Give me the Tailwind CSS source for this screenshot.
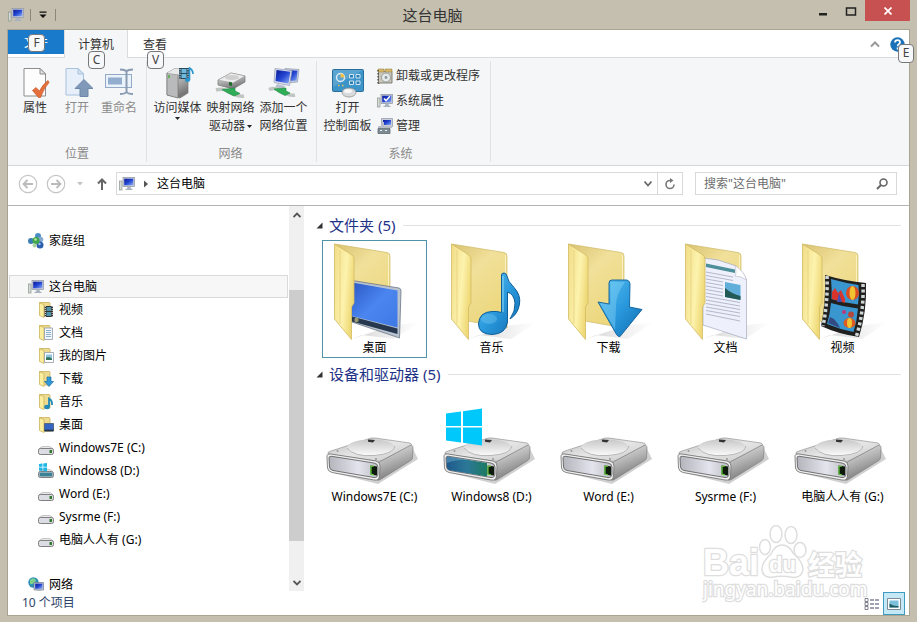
<!DOCTYPE html>
<html lang="zh-CN">
<head>
  <meta charset="UTF-8" />
  <meta name="viewport" content="width=device-width, initial-scale=1" />
  <title>这台电脑</title>
  <script src="https://cdn.jsdelivr.net/npm/@tailwindcss/browser@4"></script>
</head>
<body class="h-screen flex flex-col overflow-hidden bg-[#c5bfaf] px-2 pb-[7px] font-['Noto_Sans','Noto_Sans_CJK_SC',sans-serif] text-xs text-black">

  <!-- Shared icon shapes -->
  <svg class="absolute w-0 h-0" aria-hidden="true">
    <defs>
      <linearGradient id="gFlap" x1="0" y1="0" x2="1" y2="0.4">
        <stop offset="0" stop-color="#f0dc86" /><stop offset="0.6" stop-color="#fdf3ae" /><stop offset="1" stop-color="#efd977" />
      </linearGradient>
      <linearGradient id="gBack" x1="0" y1="0" x2="0.6" y2="1">
        <stop offset="0" stop-color="#d9c271" /><stop offset="0.4" stop-color="#f1e09a" /><stop offset="1" stop-color="#ecd77c" />
      </linearGradient>
      <linearGradient id="gShade" x1="0" y1="0" x2="1" y2="0">
        <stop offset="0" stop-color="#999" stop-opacity="0.45" /><stop offset="1" stop-color="#bbb" stop-opacity="0" />
      </linearGradient>
      <linearGradient id="gScreen" x1="0" y1="0" x2="1" y2="1">
        <stop offset="0" stop-color="#2c58c4" /><stop offset="0.5" stop-color="#4b86f0" /><stop offset="1" stop-color="#3c77e4" />
      </linearGradient>
      <linearGradient id="gBlue" x1="0" y1="0" x2="1" y2="1">
        <stop offset="0" stop-color="#5cc0ee" /><stop offset="0.5" stop-color="#2b9ade" /><stop offset="1" stop-color="#0f6cb0" />
      </linearGradient>
      <linearGradient id="gTop" x1="0" y1="0" x2="1" y2="1">
        <stop offset="0" stop-color="#b9b9b9" /><stop offset="0.5" stop-color="#e6e6e6" /><stop offset="1" stop-color="#c9c9c9" />
      </linearGradient>
      <linearGradient id="gSide" x1="0" y1="0" x2="0.4" y2="1">
        <stop offset="0" stop-color="#efefef" /><stop offset="0.5" stop-color="#b5b5b5" /><stop offset="1" stop-color="#777" />
      </linearGradient>
      <linearGradient id="gFront" x1="0" y1="0" x2="1" y2="0">
        <stop offset="0" stop-color="#b4b4bc" /><stop offset="0.6" stop-color="#e4e4ee" /><stop offset="1" stop-color="#bdbdc4" />
      </linearGradient>
      <linearGradient id="gSys" x1="0" y1="0" x2="1" y2="0">
        <stop offset="0" stop-color="#1e5a8c" /><stop offset="0.5" stop-color="#2c7898" /><stop offset="1" stop-color="#1d7a62" />
      </linearGradient>
      <linearGradient id="gNavy" x1="0" y1="0" x2="1" y2="1">
        <stop offset="0" stop-color="#0a1a96" /><stop offset="0.5" stop-color="#2446d2" /><stop offset="1" stop-color="#8fb0f6" />
      </linearGradient>
      <linearGradient id="gDisc" x1="0" y1="0" x2="0" y2="1">
        <stop offset="0" stop-color="#c8c8c8" /><stop offset="1" stop-color="#fafafa" />
      </linearGradient>

      <symbol id="folder" viewBox="0 0 105 98">
        <path d="M30 97 L68 84 L98 80 L72 97 L40 93z" fill="url(#gShade)" />
        <path d="M12.500 2 L65 10.500 Q68 11 68 14 V86 L29 79z" fill="url(#gBack)" stroke="#cfb964" stroke-width="0.7" />
        <path d="M66.500 13 V85" stroke="#fbf2c4" stroke-width="1" fill="none" />
      </symbol>
      <symbol id="flap" viewBox="0 0 105 98">
        <path d="M12.500 2 L30 13 Q32 14.500 32 17 V61 L29.500 65 V97.500 L12.500 77z" fill="url(#gFlap)" stroke="#d3bb62" stroke-width="0.8" />
        <path d="M18 8 V82" stroke="#e4cd78" stroke-width="0.7" />
      </symbol>

      <symbol id="drive" viewBox="0 0 105 98">
        <path d="M12 82 L56 93 L96 68 L90 56z" fill="#777" opacity="0.35" />
        <path d="M6 63 Q5 61 9 60 L46 48 Q49 46.500 53 47 L88 52 Q91 53 88 55 L61 69 Q58 71 54 70z" fill="url(#gTop)" stroke="#8a8a8a" stroke-width="0.6" />
        <ellipse cx="49" cy="56.500" rx="24" ry="8" fill="url(#gDisc)" />
        <path d="M25 57 Q32 66 52 64.500 Q72 63 73 55" fill="none" stroke="#a8a8a8" stroke-width="0.8" />
        <path d="M46 48.500 l7 0.500 -2 2.500 -5 -0.800z" fill="#333" />
        <circle cx="15.500" cy="60" r="1" fill="#999" /><circle cx="54" cy="68" r="1" fill="#999" />
        <path d="M57 72 Q58 70 61 69 L88 54.500 Q91 53.500 91 57 L90.500 67 Q90 69 88 70 L60 87.500 Q57 90 55 89z" fill="url(#gSide)" stroke="#777" stroke-width="0.6" />
        <path d="M5 66 Q4.500 62.500 9 63 L54 70 Q58 71 58 75 L57.500 85 Q57 90 52 89 L10 81.500 Q6 80.500 5.500 77z" fill="#f0f0f0" stroke="#6c6c6c" stroke-width="0.8" />
        <path d="M7 67 Q7 65 9.500 65.300 L52 72 Q56 72.700 56 76 V83 Q55.500 87 52 86.500 L11 79.500 Q8 79 7.500 76z" fill="url(#gFront)" stroke="#555" stroke-width="0.8" />
        <path d="M48.500 74.500 l6.500 1 v9 l-6.500 -1z" fill="#0d1a0c" />
        <path d="M52 75 l-3 0.500 v7.500 l3 1" fill="none" stroke="#62d13a" stroke-width="1.200" />
      </symbol>

      <symbol id="s-folder" viewBox="0 0 16 16">
        <path d="M1.500 0.500 H11 Q12 0.500 12 1.500 V14 L5.500 14z" fill="#eddb92" stroke="#c9b05a" stroke-width="0.8" />
        <path d="M1.500 0.800 L6 2.500 V15.500 L1.500 13.500z" fill="#fbee9f" stroke="#cdb55c" stroke-width="0.8" />
      </symbol>
      <symbol id="s-drive" viewBox="0 0 16 16">
        <path d="M1 9 Q3 6.500 5 6.500 H11 Q13 6.500 15 9z" fill="#e9e9e9" stroke="#a5a5a5" stroke-width="0.6" />
        <rect x="0.500" y="8.500" width="15" height="6" rx="1.800" fill="#dcdce4" stroke="#808080" />
        <rect x="11.500" y="10" width="2.500" height="3" fill="#2e7a2c" />
      </symbol>
      <symbol id="s-pc" viewBox="0 0 16 16">
        <rect x="0.500" y="5" width="2.500" height="9" fill="#d7dbd7" stroke="#8a958e" stroke-width="0.7" />
        <rect x="4" y="1.500" width="11.500" height="9" fill="#c9ced8" stroke="#8c93a3" stroke-width="0.7" />
        <rect x="5.200" y="2.700" width="9.100" height="6.600" fill="url(#gNavy)" />
        <path d="M8.500 10.800h3l0.500 2h1.500v1.200h-7v-1.200h1.500z" fill="#a9b2c0" />
      </symbol>
    </defs>
  </svg>

  <!-- Title bar -->
  <header class="h-[30px] shrink-0 flex -mr-px">
    <div class="flex items-center gap-1.5">
      <svg class="size-4"><use href="#s-pc" /></svg>
      <span class="h-3 w-px bg-[#8c8778]"></span>
      <button class="w-3 h-4 flex items-center justify-center" aria-label="自定义快速访问工具栏">
        <svg class="w-2 h-2" viewBox="0 0 8 8"><path d="M0.500 0.500h7v1.200h-7zM0.500 3.500h7L4 7z" fill="#111" /></svg>
      </button>
      <span class="h-3 w-px bg-[#8c8778]"></span>
    </div>
    <h1 class="flex-1 text-center text-[15px] leading-[30px] text-[#333]">这台电脑</h1>
    <div class="flex items-start">
      <button class="w-7 h-[21px] flex items-center justify-center" aria-label="最小化">
        <svg class="w-3 h-3" viewBox="0 0 12 12"><path d="M2 8h8v2.500H2z" fill="#222" /></svg>
      </button>
      <button class="w-7 h-[21px] flex items-center justify-center" aria-label="最大化">
        <svg class="w-3 h-3" viewBox="0 0 12 12"><path d="M1.500 3h9v7h-9z" fill="none" stroke="#222" stroke-width="1.500" /></svg>
      </button>
      <button class="w-[45px] h-[21px] bg-[#c75050] flex items-center justify-center" aria-label="关闭">
        <svg class="w-2 h-2" viewBox="0 0 8 8"><path d="M0.500 0.500l7 7M7.500 0.500l-7 7" stroke="#fff" stroke-width="1.700" /></svg>
      </button>
    </div>
  </header>

  <div class="flex-1 min-h-0 flex flex-col bg-white outline outline-[#a9a392]">
    <!-- Ribbon tabs -->
    <div class="relative h-7 shrink-0 flex items-start border-b border-[#dadbdc] text-[#333]">
      <button class="relative w-14 h-6 pt-0.5 bg-[#1979ca] text-white">文件
        <kbd class="absolute left-5 top-1 w-[17px] h-[18px] rounded-sm border border-[#777] bg-[#f7f8fa] text-center font-[inherit] text-xs leading-4 text-[#444]">F</kbd>
      </button>
      <button class="relative w-16 h-7 pt-0.5 -mb-px bg-[#f5f6f7] border-x border-[#dadbdc]">计算机
        <kbd class="absolute left-[23px] top-[21px] w-[17px] h-[18px] rounded-sm border border-[#777] bg-[#f7f8fa] text-center font-[inherit] text-xs leading-4 text-[#444] z-10">C</kbd>
      </button>
      <button class="relative w-14 h-7 pt-0.5 -ml-px">查看
        <kbd class="absolute left-5 top-[21px] w-[17px] h-[18px] rounded-sm border border-[#777] bg-[#f7f8fa] text-center font-[inherit] text-xs leading-4 text-[#444] z-10">V</kbd>
      </button>
      <div class="ml-auto h-7 flex items-center gap-1.5 pr-1">
        <button class="p-1" aria-label="最小化功能区">
          <svg class="w-2.5 h-2" viewBox="0 0 10 8"><path d="M1 6.500l4-4 4 4" fill="none" stroke="#999" stroke-width="2" /></svg>
        </button>
        <button class="relative" aria-label="帮助">
          <svg class="size-[15px]" viewBox="0 0 15 15"><circle cx="7.500" cy="7.500" r="7.200" fill="#1c72b8" /><path d="M5 5.600Q5 3.200 7.500 3.200T10 5.300Q10 6.500 8.700 7.300 7.600 8 7.600 9.200M7.600 10.600v1.800" fill="none" stroke="#fff" stroke-width="1.700" /></svg>
          <kbd class="absolute left-2 top-[7px] w-[16px] h-[19px] rounded-sm border border-[#777] bg-[#f7f8fa] text-center font-[inherit] text-xs leading-4 text-[#444] z-10">E</kbd>
        </button>
      </div>
    </div>

    <!-- Ribbon -->
    <div class="h-[108px] shrink-0 flex bg-[#f5f6f7] border-b border-[#d5d6d7] py-[3px] leading-[18px] text-[#333]">
      <section class="flex flex-col justify-between border-r border-[#e1e2e3] pt-1.5 px-1.5">
        <div class="flex items-start">
          <button class="w-[42px] flex flex-col items-center">
            <svg class="size-8" viewBox="0 0 32 32">
              <path d="M5 1.500H21L26.500 7V29H5z" fill="#fdfdfd" stroke="#8d8d8d" />
              <path d="M21 1.500V7h5.500z" fill="#e4e4e4" stroke="#8d8d8d" />
              <path d="M13.500 23.500L17 20.500L20.500 24Q24 17 29 13.500L30 15.500Q25 21 21.500 30.500H19.500z" fill="#e6703c" stroke="#c45426" stroke-width="0.7" />
            </svg>
            属性
          </button>
          <button class="w-[42px] flex flex-col items-center text-[#8c8c8c]" disabled>
            <svg class="size-8" viewBox="0 0 32 32">
              <path d="M5 1.500H17L22.500 7V28H5z" fill="#e6effa" stroke="#a9c1de" />
              <path d="M17 1.500V7h5.500z" fill="#d3e2f3" stroke="#a9c1de" />
              <path d="M23 12.500L32 21.500H27V29.500H19V21.500H14z" fill="#8199b8" stroke="#6f88aa" />
            </svg>
            打开
          </button>
          <button class="w-[42px] flex flex-col items-center text-[#8c8c8c]" disabled>
            <svg class="size-8" viewBox="0 0 32 32">
              <rect x="2.500" y="7.500" width="26" height="13" fill="#eaf2fb" stroke="#93a9c6" />
              <rect x="5" y="10.500" width="14" height="7" fill="#93adcf" />
              <path d="M17 2.500Q22 2.500 23.500 4.500Q25 2.500 30 2.500M23.500 4v22M17 27Q22 27 23.500 25Q25 27 30 27" fill="none" stroke="#8a9bb3" stroke-width="2" />
            </svg>
            重命名
          </button>
        </div>
        <h2 class="text-center text-[#8a8a8a] leading-4">位置</h2>
      </section>

      <section class="flex flex-col justify-between border-r border-[#e1e2e3] pt-1.5 pl-1 pr-1.5">
        <div class="flex items-start">
          <button class="w-[53px] flex flex-col items-center">
            <svg class="size-8" viewBox="0 0 32 32">
              <path d="M5 6L13 1.500L26 3V26L18 31L5 28z" fill="url(#gSide)" stroke="#777" stroke-width="0.7" />
              <path d="M5 6L16 7.500V31L5 28z" fill="#b9babb" stroke="#777" stroke-width="0.7" />
              <path d="M5 6L13 1.500L26 3L16 7.500z" fill="#e9e9e9" />
              <path d="M7 8v3" stroke="#4caf3a" stroke-width="1.500" />
              <path d="M17 1h10v11h-10z" fill="#274a5e" /><path d="M19.500 2h5v4h-5zM19.500 7h5v4h-5z" fill="#6fb9dc" />
              <path d="M18 2v10M26 2v10" stroke="#dfe9ee" stroke-dasharray="1.200 1.200" />
              <path d="M27.500 13V1Q31 3 31 7" fill="none" stroke="#2a95d0" stroke-width="1.600" /><ellipse cx="25.500" cy="13" rx="2.700" ry="2" fill="#2a95d0" />
            </svg>
            访问媒体
            <svg class="w-[5px] h-[3px]" viewBox="0 0 5 3"><path d="M0 0h5L2.500 3z" fill="#222" /></svg>
          </button>
          <button class="w-[53px] flex flex-col items-center">
            <svg class="size-8" viewBox="0 0 32 32">
              <path d="M3 13L16 6L30 9V15L18 22L3 18z" fill="url(#gSide)" stroke="#777" stroke-width="0.7" />
              <path d="M3 13L16 6L30 9L18 16z" fill="#ededed" stroke="#999" stroke-width="0.5" />
              <ellipse cx="17" cy="10.500" rx="7" ry="2.500" fill="#cfcfcf" />
              <path d="M14 14.700l3 0.800v3.500l-3-0.800z" fill="#1c6c2a" />
              <path d="M1 23Q8 21 12 24L18 27Q24 30 29 29" fill="none" stroke="#bfc5c0" stroke-width="3.500" />
              <path d="M7 22.500L20 21V24L25 26.500L19 29L13 26z" fill="#2fae57" stroke="#1b8a40" stroke-width="0.6" />
            </svg>
            映射网络
            <span class="flex items-center gap-0.5">驱动器
              <svg class="w-[5px] h-[3px]" viewBox="0 0 5 3"><path d="M0 0h5L2.500 3z" fill="#222" /></svg>
            </span>
          </button>
          <button class="w-[53px] flex flex-col items-center">
            <svg class="size-8" viewBox="0 0 32 32">
              <path d="M17 1.500L31 2.500L29.500 15L19 16z" fill="#c3cbdf" stroke="#939cb2" stroke-width="0.7" /><path d="M19 3L29.500 3.800L28.500 13.500L20 14z" fill="url(#gNavy)" />
              <path d="M7 1.500L24 3.500L21.500 18.500L6 15.500z" fill="#d7dceb" stroke="#939cb2" stroke-width="0.7" /><path d="M8.500 3L22.300 4.800L20.500 16.500L7.500 14z" fill="url(#gNavy)" />
              <path d="M9 17l8 2-1 3-9-1.500z" fill="#b8bfcd" />
              <path d="M1 22.500Q7 20 12 24L18 26.500Q23 29 27 28" fill="none" stroke="#bfc5c0" stroke-width="3.500" />
              <path d="M6 22L18 21V24L22 26L17 28.500L11 25.500z" fill="#2fae57" stroke="#1b8a40" stroke-width="0.6" />
            </svg>
            <span>添加一个<br />网络位置</span>
          </button>
        </div>
        <h2 class="text-center text-[#8a8a8a] leading-4">网络</h2>
      </section>

      <section class="flex flex-col justify-between border-r border-[#e1e2e3] pt-1.5 pl-1 pr-2.5">
        <div class="flex items-start gap-[3px]">
          <button class="w-[53px] flex flex-col items-center">
            <svg class="size-8" viewBox="0 0 32 32">
              <rect x="0.500" y="2.500" width="31" height="22" rx="1" fill="#3c94c8" stroke="#2a6f9c" />
              <path d="M1 3h30L1 20z" fill="#fff" opacity="0.15" />
              <circle cx="8.500" cy="10.500" r="4" fill="none" stroke="#dcebf4" stroke-width="1.500" /><path d="M8.500 6.500a4 4 0 0 1 4 4h-4z" fill="#f3c04a" />
              <path d="M17.500 7.500h4v3.500h-4zM24 7.500h4v3.500h-4zM17.500 14h4v3.500h-4zM24 14h4v3.500h-4z" fill="#2c7db2" stroke="#cfe6f4" />
              <path d="M6 18.500h1.500M10 18.500h1.500" stroke="#f3c04a" stroke-width="1.500" />
              <ellipse cx="17" cy="25.500" rx="7" ry="4.500" fill="#d9dadb" stroke="#8b8b8b" stroke-width="0.7" /><ellipse cx="16" cy="24" rx="4" ry="2" fill="#f7f7f7" />
            </svg>
            <span>打开<br />控制面板</span>
          </button>
          <div class="-mt-1 flex flex-col">
            <button class="h-[25px] flex items-center gap-[3px]">
              <svg class="size-4" viewBox="0 0 16 16"><path d="M1.500 16V3.500h13.500V15H3z" fill="#c9c5ba" stroke="#6b6b60" stroke-width="0.8" /><path d="M1 1h6v3H1zM8 1h7v3H8z" fill="#d8b866" stroke="#8a7a45" stroke-width="0.5" /><path d="M1 2v14" stroke="#222" stroke-dasharray="1.500 1.500" /><circle cx="9" cy="9.500" r="4.500" fill="#e5e9e9" stroke="#85908f" stroke-width="0.8" /><circle cx="9" cy="9.500" r="1.400" fill="#8b9899" /></svg>
              卸载或更改程序
            </button>
            <button class="h-[25px] flex items-center gap-[3px]">
              <svg class="size-4"><use href="#s-pc" /><path d="M7 5.500l2 2.200 4-4.500" fill="none" stroke="#fff" stroke-width="1.500" /></svg>
              系统属性
            </button>
            <button class="h-[25px] flex items-center gap-[3px]">
              <svg class="size-4" viewBox="0 0 16 16"><path d="M4.500 0.500h11v8h-11z" fill="#c9ced8" stroke="#8c93a3" stroke-width="0.7" /><path d="M6 2h8v5H6z" fill="url(#gNavy)" /><path d="M1 8h3l1-4h2v4h8v2H1z" fill="#b9bec7" /><path d="M1 10.500h12v5H1z" fill="#7d8b93" stroke="#55606a" stroke-width="0.7" /><path d="M3 12.500h2M8 12.500h2" stroke="#eee" /></svg>
              管理
            </button>
          </div>
        </div>
        <h2 class="text-center text-[#8a8a8a] leading-4">系统</h2>
      </section>
    </div>

    <!-- Navigation bar -->
    <div class="h-10 shrink-0 flex items-center border-b border-[#b3b3b3] pl-2.5 pr-3 pb-1">
      <button aria-label="后退"><svg class="size-5" viewBox="0 0 20 20"><circle cx="10" cy="10" r="8.700" fill="none" stroke="#c5c5c5" stroke-width="1.200" /><path d="M15 10H6M9.500 6L5.500 10l4 4" fill="none" stroke="#bbb" stroke-width="1.800" /></svg></button>
      <button class="ml-2" aria-label="前进"><svg class="size-5" viewBox="0 0 20 20"><circle cx="10" cy="10" r="8.700" fill="none" stroke="#c5c5c5" stroke-width="1.200" /><path d="M5 10h9M10.500 6l4 4-4 4" fill="none" stroke="#bbb" stroke-width="1.800" /></svg></button>
      <button class="ml-2.5" aria-label="最近浏览的位置"><svg class="w-2 h-1.5" viewBox="0 0 8 6"><path d="M1 1h6L4 4.500z" fill="#c4c4c4" /></svg></button>
      <button class="ml-3" aria-label="上移"><svg class="w-3 h-3.5" viewBox="0 0 12 14"><path d="M6 13V2.500M2 6.500l4-4 4 4" fill="none" stroke="#666" stroke-width="2" /></svg></button>
      <div class="ml-2 flex-1 h-[23px] flex items-center border border-[#d9d9d9] pl-0.5">
        <svg class="size-4"><use href="#s-pc" /></svg>
        <svg class="ml-2 w-1.5 h-2" viewBox="0 0 6 8"><path d="M1 0.500v7L5 4z" fill="#555" /></svg>
        <span class="ml-2 leading-4">这台电脑</span>
        <button class="ml-auto px-1" aria-label="以前的位置"><svg class="w-2.5 h-2" viewBox="0 0 10 8"><path d="M1.500 1.500L5 5.500l3.500-4" fill="none" stroke="#666" stroke-width="1.800" /></svg></button>
        <button class="h-full w-[25px] border-l border-[#d9d9d9] flex items-center justify-center" aria-label="刷新">
          <svg class="size-3" viewBox="0 0 12 12"><path d="M10 6.500A4 4 0 1 1 6 2.500h1" fill="none" stroke="#777" stroke-width="1.600" /><path d="M6 0v5l3.500-2.500z" fill="#777" /></svg>
        </button>
      </div>
      <label class="ml-3 w-[202px] h-[23px] flex items-center border border-[#d9d9d9] px-2">
        <input type="search" aria-label="搜索" placeholder="搜索&quot;这台电脑&quot;" class="flex-1 min-w-0 outline-none placeholder:text-[#6d6d6d]" />
        <svg class="size-3" viewBox="0 0 12 12"><circle cx="7.500" cy="4.500" r="3.500" fill="none" stroke="#666" stroke-width="1.600" /><path d="M5 7L1 11" stroke="#666" stroke-width="2" /></svg>
      </label>
    </div>

    <div class="flex-1 min-h-0 flex">
      <div class="w-[298px] shrink-0 flex flex-col">
        <div class="flex-1 min-h-0 flex">
          <!-- Folder tree -->
          <nav class="flex-1 overflow-hidden pt-[23px] px-px flex flex-col *:shrink-0">
            <a href="#" class="h-[23px] mb-[23px] pl-[19px] flex items-center gap-[5px]">
              <svg class="size-4" viewBox="0 0 16 16"><circle cx="3" cy="8" r="3" fill="#3b7fb5" /><circle cx="10" cy="3" r="3" fill="#4a8fc4" /><circle cx="12.500" cy="6.500" r="2.800" fill="#86a9cf" /><circle cx="12" cy="12" r="3.500" fill="#2c5fae" /><circle cx="8" cy="7.500" r="3.500" fill="#3fa64a" /><circle cx="6.500" cy="12.500" r="2" fill="#a9d39a" /><circle cx="7.500" cy="6.500" r="1.300" fill="#b9e6a6" /><circle cx="11.500" cy="11" r="1.200" fill="#9cc2f0" /></svg>
              家庭组
            </a>
            <a href="#" class="h-[23px] pl-[18px] flex items-center gap-[5px] bg-[#f7f7f7] border border-[#dadada]">
              <svg class="size-4"><use href="#s-pc" /></svg>
              这台电脑
            </a>
            <a href="#" class="h-[23px] pl-[29px] flex items-center gap-[5px]"><svg class="size-4"><use href="#s-folder" /><path d="M6.500 4h8.500v11h-8.500z" fill="#333" /><path d="M8.500 5h4.500v4h-4.500zM8.500 10h4.500v4h-4.500z" fill="#4e93a8" /><path d="M7.300 4v11M14.200 4v11" stroke="#eee" stroke-dasharray="1 1" /></svg>视频</a>
            <a href="#" class="h-[23px] pl-[29px] flex items-center gap-[5px]"><svg class="size-4"><use href="#s-folder" /><path d="M6.500 3h8v11.500h-8z" fill="#f4f6fb" stroke="#8f9cac" stroke-width="0.8" /><path d="M8 5.500h5M8 7.500h5M8 9.500h5M8 11.500h5" stroke="#6ea0bf" stroke-width="0.8" /></svg>文档</a>
            <a href="#" class="h-[23px] pl-[29px] flex items-center gap-[5px]"><svg class="size-4"><use href="#s-folder" /><path d="M6.500 4.500h9v10h-9z" fill="#fff" stroke="#8f9cac" stroke-width="0.8" /><path d="M8 6.500h6v5.500h-6z" fill="#8cc3de" /><path d="M8 12v-2.500q3-1.500 6 1v1.500z" fill="#35755a" /></svg>我的图片</a>
            <a href="#" class="h-[23px] pl-[29px] flex items-center gap-[5px]"><svg class="size-4"><use href="#s-folder" /><path d="M9 6h4v4.500h2.500L11 15.500 6.500 10.500H9z" fill="#2f9ad6" stroke="#1b6da3" stroke-width="0.7" /></svg>下载</a>
            <a href="#" class="h-[23px] pl-[29px] flex items-center gap-[5px]"><svg class="size-4"><use href="#s-folder" /><path d="M11 13V4.500Q14.500 6.500 14 11" fill="none" stroke="#2089b8" stroke-width="1.800" /><ellipse cx="9" cy="13" rx="2.800" ry="2.200" fill="#2089b8" /></svg>音乐</a>
            <a href="#" class="h-[23px] pl-[29px] flex items-center gap-[5px]"><svg class="size-4"><use href="#s-folder" /><path d="M6.500 6.500h9v7.500h-9z" fill="#3565c4" stroke="#55687d" /><path d="M6.500 13.500h9" stroke="#26313d" stroke-width="1.500" /></svg>桌面</a>
            <a href="#" class="h-[23px] pl-[29px] flex items-center gap-[5px]"><svg class="size-4"><use href="#s-drive" /></svg>Windows7E (C:)</a>
            <a href="#" class="h-[23px] pl-[29px] flex items-center gap-[5px]"><svg class="size-4"><use href="#s-drive" /><path d="M1.500 9.500h13v4h-13z" fill="#3c8194" /><path d="M1 1l3.500-.5v3.300H1zM5.300.4L9 0v3.800H5.300zM1 4.600h3.500v3.300L1 7.500zM5.300 4.600H9v3.900l-3.700-.5z" fill="#1fb6e6" /></svg>Windows8 (D:)</a>
            <a href="#" class="h-[23px] pl-[29px] flex items-center gap-[5px]"><svg class="size-4"><use href="#s-drive" /></svg>Word (E:)</a>
            <a href="#" class="h-[23px] pl-[29px] flex items-center gap-[5px]"><svg class="size-4"><use href="#s-drive" /></svg>Sysrme (F:)</a>
            <a href="#" class="h-[23px] pl-[29px] flex items-center gap-[5px]"><svg class="size-4"><use href="#s-drive" /></svg>电脑人人有 (G:)</a>
            <a href="#" class="h-[23px] mt-[22px] pl-[19px] flex items-center gap-[5px]">
              <svg class="size-4" viewBox="0 0 16 16"><circle cx="5.500" cy="5.500" r="5.200" fill="#2b8fb5" /><path d="M2 3q3-3 5-1t-1 4-4 1z" fill="#7fd18a" /><path d="M6 5.500h9.500v7.500H6z" fill="#c9ced8" stroke="#6c7690" stroke-width="0.7" /><path d="M7.200 6.600h7.200v5.200H7.200z" fill="url(#gNavy)" /><path d="M9 13.500h4v1.500H9z" fill="#98a1b2" /></svg>
              网络
            </a>
          </nav>
          <!-- Scrollbar -->
          <div class="w-[15px] mr-0.5 bg-[#f0f0f0] flex flex-col">
            <button class="h-[17px] flex items-center justify-center" aria-label="向上滚动"><svg class="w-2 h-1.5" viewBox="0 0 8 6"><path d="M0.500 5L4 1.500 7.500 5" fill="none" stroke="#555" stroke-width="1.800" /></svg></button>
            <div class="flex-1 flex flex-col">
              <div class="grow-67"></div>
              <div class="grow-251 bg-[#cdcdcd]"></div>
              <div class="grow-33"></div>
            </div>
            <button class="h-[17px] flex items-center justify-center" aria-label="向下滚动"><svg class="w-2 h-1.5" viewBox="0 0 8 6"><path d="M0.500 1L4 4.500 7.500 1" fill="none" stroke="#555" stroke-width="1.800" /></svg></button>
          </div>
        </div>
        <p class="h-6 pl-[14px] leading-[23px] text-[#2c4468]">10 个项目</p>
      </div>

      <!-- Contents -->
      <main class="relative flex-1 min-w-0 flex flex-col gap-px pt-1">
        <section>
          <h2 class="h-[30px] pl-2.5 pr-2 flex items-center text-[15px] text-[#1e3287]">
            <svg class="w-[7px] h-[7px]" viewBox="0 0 7 7"><path d="M6.500 0.500v6h-6z" fill="#333" /></svg>
            <span class="ml-1.5">文件夹 (5)</span>
            <span class="ml-2 flex-1 h-px bg-[#e2e2e2]"></span>
          </h2>
          <div class="pl-4 flex flex-wrap gap-x-3">
            <button class="w-[105px] h-[118px] leading-4 outline -outline-offset-1 outline-[#4f93a8]">
              <svg class="w-full h-[98px]" viewBox="0 0 105 98">
                <use href="#folder" />
                <path d="M30 38.500L77 46Q79 46.500 79 49L77.500 96L30 80z" fill="#b9c3d0" stroke="#6b7686" stroke-width="0.8" />
                <path d="M30 40.500L75.500 48.500V85.500L30 74z" fill="url(#gScreen)" />
                <path d="M30 74.500L75.500 86.500V92L30 79.500z" fill="#26374e" />
                <circle cx="34.500" cy="78" r="2.200" fill="#9a9a72" />
                <use href="#flap" />
              </svg>
              桌面
            </button>
            <button class="w-[105px] h-[118px] leading-4">
              <svg class="w-full h-[98px]" viewBox="0 0 105 98">
                <use href="#folder" /><use href="#flap" />
                <path d="M62.500 33Q62.500 31 65 31Q67 31 67.500 33Q69 40 75 45.500Q82 53 80.500 62Q79 72 71 77Q76.500 69 76 61Q75 52 68.500 50V80Q67 92 53 92.500Q39.500 92 39.500 82Q40 70 53 69.500Q58 69 62.500 70.500z" fill="url(#gBlue)" stroke="#0f5f98" stroke-width="1" />
                <ellipse cx="50" cy="77" rx="8" ry="5" fill="#7dcdf4" opacity="0.35" />
                <path d="M64 34V70" stroke="#8fd8f8" stroke-width="1" />
              </svg>
              音乐
            </button>
            <button class="w-[105px] h-[118px] leading-4">
              <svg class="w-full h-[98px]" viewBox="0 0 105 98">
                <use href="#folder" /><use href="#flap" />
                <path d="M53 41Q53 38 56 38H71Q74 39 74 42L73.500 65L86 67.500L64 94.500Q62 95 60.500 92.500L42 60L53 62z" fill="url(#gBlue)" stroke="#0f5f98" stroke-width="0.9" />
                <path d="M54.500 40H69Q60 52 60 64L59 88L44 61L54.500 63z" fill="#8ad6f7" opacity="0.4" />
              </svg>
              下载
            </button>
            <button class="w-[105px] h-[118px] leading-4">
              <svg class="w-full h-[98px]" viewBox="0 0 105 98">
                <use href="#folder" />
                <path d="M30 16L45 18L62 23.500Q71 30 73.500 38V97L30 83z" fill="#eef0fb" stroke="#a5a9bd" stroke-width="0.7" />
                <path d="M62 23.500Q64 31 62 34Q68 34 73.500 38Q71 29 62 23.500z" fill="#fff" stroke="#b3b6c6" stroke-width="0.6" />
                <path d="M33 21.500L62 27.500V31L33 25z" fill="#4d8f9b" />
                <path d="M33 30l27 5M33 33.500l27 5M33 37l17 3M33 40.500l17 3M33 44l17 3M33 47.500l17 3M33 51l17 3M33 54.500l34 6M33 58l34 6M33 61.500l34 6M33 65l34 6M33 68.500l34 6M33 72l34 7" stroke="#9a9fb4" stroke-width="0.7" fill="none" />
                <path d="M52 40l15.500 3v15L52 55z" fill="#62aedb" /><path d="M52 46q7 6 15.500 8v4L52 55z" fill="#245a55" />
                <use href="#flap" />
              </svg>
              文档
            </button>
            <button class="w-[105px] h-[118px] leading-4">
              <svg class="w-full h-[98px]" viewBox="0 0 105 98">
                <use href="#folder" />
                <path d="M35 33Q55 39 76 41Q77 70 69 95Q48 92 31 84Q36 60 35 33z" fill="#20201f" />
                <path d="M37 34Q38 60 33 84M73 42Q74 70 66.500 94" fill="none" stroke="#cfd6d6" stroke-width="3.500" stroke-dasharray="3 2.500" />
                <path d="M41 37Q55 41 68.500 43Q69.500 53 68 62.500Q54 61 41.500 57Q42 47 41 37z" fill="#3a96cf" />
                <path d="M41 61Q54 65 68 66.500Q67 79 63.500 90Q49 87 37 82Q40 72 41 61z" fill="#3a96cf" />
                <ellipse cx="62.500" cy="51" rx="6.500" ry="7" fill="#d94b23" /><ellipse cx="62.500" cy="51" rx="3" ry="7" fill="#f2c230" />
                <path d="M42 57V50l3-4 3 5 3-3 4 9v4z" fill="#d8342a" /><path d="M47 60l2-9 3 9z" fill="#3d50b9" />
                <ellipse cx="59.500" cy="81" rx="6" ry="5" fill="#db5b22" /><ellipse cx="59.500" cy="81" rx="2.500" ry="5" fill="#f2c230" />
                <circle cx="54" cy="70" r="2" fill="#b83a7c" /><circle cx="61" cy="72.500" r="3" fill="#b5473c" />
                <path d="M38 81l2-6 4 2 4 5 2 4z" fill="#344a83" />
                <use href="#flap" />
              </svg>
              视频
            </button>
          </div>
        </section>

        <section>
          <h2 class="h-[30px] pl-2.5 pr-2 flex items-center text-[15px] text-[#1e3287]">
            <svg class="w-[7px] h-[7px]" viewBox="0 0 7 7"><path d="M6.500 0.500v6h-6z" fill="#333" /></svg>
            <span class="ml-1.5">设备和驱动器 (5)</span>
            <span class="ml-2 flex-1 h-px bg-[#e2e2e2]"></span>
          </h2>
          <div class="pl-4 flex flex-wrap gap-x-3">
            <button class="w-[105px] h-[118px] leading-4"><svg class="w-full h-[98px]"><use href="#drive" /></svg>Windows7E (C:)</button>
            <button class="w-[105px] h-[118px] leading-4">
              <svg class="w-full h-[98px]" viewBox="0 0 105 98">
                <use href="#drive" />
                <path d="M7.500 67Q7.500 65.500 9.500 65.800L48 72V85.500L11 79.200Q8 78.500 8 76z" fill="url(#gSys)" />
                <path d="M8 72Q20 68 30 69L9.500 65.800Q7.500 65.500 7.500 67z" fill="#7fb9d6" opacity="0.4" />
                <path d="M7 22.500l15-2v14.500H7zM24 20.200L43 17.500V35H24zM7 36.500h15V51.500L7 49.500zM24 36.500h19V54.500L24 51.800z" fill="#00c8fb" />
              </svg>
              Windows8 (D:)
            </button>
            <button class="w-[105px] h-[118px] leading-4"><svg class="w-full h-[98px]"><use href="#drive" /></svg>Word (E:)</button>
            <button class="w-[105px] h-[118px] leading-4"><svg class="w-full h-[98px]"><use href="#drive" /></svg>Sysrme (F:)</button>
            <button class="w-[105px] h-[118px] leading-4"><svg class="w-full h-[98px]"><use href="#drive" /></svg>电脑人人有 (G:)</button>
          </div>
        </section>

        <!-- Watermark -->
        <svg class="absolute right-[37px] bottom-[8px] w-[170px] h-[86px]" viewBox="0 0 170 86" fill="#fff" stroke="#dedede" stroke-width="1.500">
          <ellipse cx="63" cy="26" rx="5.500" ry="7.500" /><ellipse cx="74" cy="13" rx="6" ry="8.500" /><ellipse cx="89" cy="14" rx="6" ry="8.500" /><ellipse cx="98" cy="29" rx="6" ry="7.500" />
          <path d="M80 24Q87 24 91 32Q101 41 101 48Q100 57 91 56.500Q80 54 69 56.500Q60 56 60 48Q60 41 69 33Q73 24 80 24z" />
          <g paint-order="stroke" stroke-width="2.500">
            <text x="1" y="54" font-family="Liberation Sans" font-weight="700" font-size="36">Bai</text>
            <text x="67" y="51" font-family="Liberation Sans" font-weight="700" font-size="22">du</text>
            <text x="106" y="54" font-family="Noto Sans CJK SC" font-weight="700" font-size="27">经验</text>
            <text x="1" y="75" font-family="Noto Sans" font-size="19">jingyan.baidu.com</text>
          </g>
        </svg>

        <!-- View switch -->
        <div class="mt-auto pr-1 flex justify-end items-center z-10">
          <button class="w-[22px] h-[22px] flex items-center justify-center" aria-label="详细信息">
            <svg class="w-4 h-3" viewBox="0 0 16 12"><path d="M1 .5h3v3H1zM1 4.500h3v3H1zM1 8.500h3v3H1z" fill="#fff" stroke="#667" stroke-width="0.8" /><path d="M6 2h4M11 2h4M6 6h4M11 6h4M6 10h4M11 10h4" stroke="#446" /></svg>
          </button>
          <button class="w-[22px] h-[23px] border border-[#3f9cc0] bg-[#c5e8f6] flex items-center justify-center" aria-label="大图标">
            <svg class="w-3.5 h-3" viewBox="0 0 14 12"><path d="M.5.500h13v11H.5z" fill="#fff" stroke="#7d8b93" /><path d="M2.500 2.500h9v7h-9z" fill="#7cc0dc" /><path d="M2.500 9.500v-4q4 3 9 2.500v1.500z" fill="#1f5a60" /></svg>
          </button>
        </div>
      </main>
    </div>
  </div>
</body>
</html>
